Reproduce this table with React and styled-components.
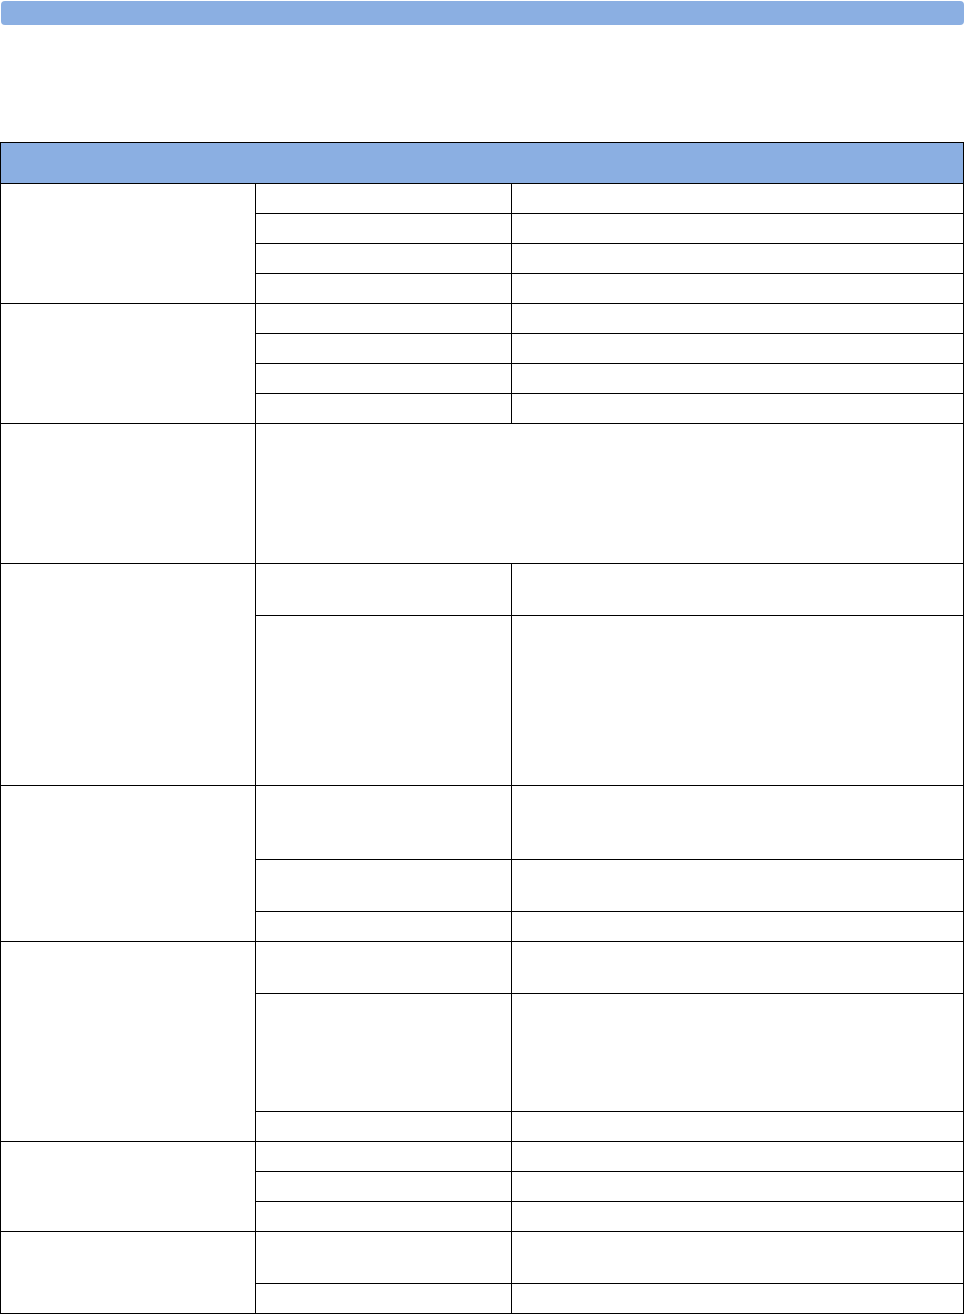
import React from 'react';
import styled, { createGlobalStyle } from 'styled-components';

const GlobalStyle = createGlobalStyle`
  html, body {
    margin: 0;
    padding: 0;
    background: #ffffff;
    font-family: "Liberation Sans", Arial, sans-serif;
  }
`;

// each group: sub-row heights (pitch between lines); span = one cell across col 2+3
const groups = [
  { rows: [30, 30, 30, 30] },
  { rows: [30, 30, 30, 30] },
  { rows: [140], span: true },
  { rows: [52, 170] },
  { rows: [74, 52, 30] },
  { rows: [52, 118, 30] },
  { rows: [30, 30, 30] },
  { rows: [52, 30] },
];

const App = () => (
  <Page>
    <GlobalStyle />
    <TopBar />
    <Table>
      <colgroup>
        <col style={{ width: 255 }} />
        <col style={{ width: 256 }} />
        <col />
      </colgroup>
      <thead>
        <tr>
          <HeaderCell colSpan={3} />
        </tr>
      </thead>
      <tbody>
        {groups.map((group, g) =>
          group.rows.map((h, r) => (
            <Row key={`${g}-${r}`} $h={h}>
              {r === 0 && <Cell rowSpan={group.rows.length} />}
              {group.span ? (
                <Cell colSpan={2} />
              ) : (
                <>
                  <Cell />
                  <Cell />
                </>
              )}
            </Row>
          ))
        )}
      </tbody>
    </Table>
  </Page>
);

const Page = styled.div`
  padding-top: 1px;
`;

const TopBar = styled.div`
  height: 24px;
  margin: 0 1px 0 1px;
  background-color: #8bafe2;
  border-radius: 4px;
`;

const Table = styled.table`
  margin-top: 117px;
  width: 964px;
  table-layout: fixed;
  border-collapse: collapse;
`;

const HeaderCell = styled.th`
  height: 40px;
  padding: 0;
  background-color: #8bafe2;
  border: 1px solid #000;
`;

const Row = styled.tr`
  height: ${(p) => p.$h}px;
`;

const Cell = styled.td`
  padding: 0;
  border: 1px solid #000;
`;

export default App;
